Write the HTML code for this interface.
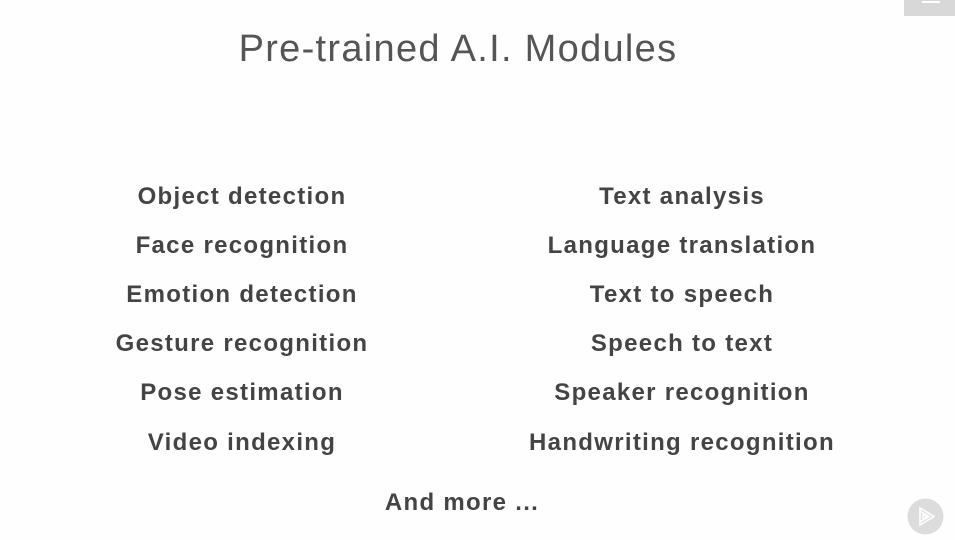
<!DOCTYPE html>
<html><head><style>
body{margin:0;width:955px;height:540px;background:#fefefe;position:relative;overflow:hidden;font-family:"Liberation Sans",sans-serif;}
.t{position:absolute;left:0;width:916px;text-align:center;top:28px;font-size:38px;color:#555;letter-spacing:1.3px;font-weight:normal}
.i{position:absolute;width:500px;margin-left:-250px;text-align:center;font-size:24px;font-weight:bold;color:#444;letter-spacing:1.3px;line-height:30px}
</style></head><body>
<div style="position:absolute;left:904px;top:0;width:51px;height:16px;background:#d8d8d8"></div>
<div style="position:absolute;left:922px;top:1px;width:18px;height:2px;background:#fff"></div>
<div class="t">Pre-trained A.I. Modules</div>
<div class="i" style="left:242px;top:182px">Object detection</div>
<div class="i" style="left:242px;top:231px">Face recognition</div>
<div class="i" style="left:242px;top:280px">Emotion detection</div>
<div class="i" style="left:242px;top:329px">Gesture recognition</div>
<div class="i" style="left:242px;top:378px">Pose estimation</div>
<div class="i" style="left:242px;top:428px">Video indexing</div>
<div class="i" style="left:682px;top:182px">Text analysis</div>
<div class="i" style="left:682px;top:231px">Language translation</div>
<div class="i" style="left:682px;top:280px">Text to speech</div>
<div class="i" style="left:682px;top:329px">Speech to text</div>
<div class="i" style="left:682px;top:378px">Speaker recognition</div>
<div class="i" style="left:682px;top:428px">Handwriting recognition</div>
<div class="i" style="left:462px;top:488px">And more ...</div>
<svg style="position:absolute;left:907px;top:498px" width="37" height="37" viewBox="0 0 37 37">
<circle cx="18.5" cy="18.5" r="18" fill="#dcdcdc"/>
<path d="M13 10 L27 18.5 L13 27 Z M13 13 L22 18.5 L13 24 M16 15.5 L19.5 18.5 L16 21.5 Z" fill="none" stroke="#fff" stroke-width="1.6"/>
</svg>
</body></html>
